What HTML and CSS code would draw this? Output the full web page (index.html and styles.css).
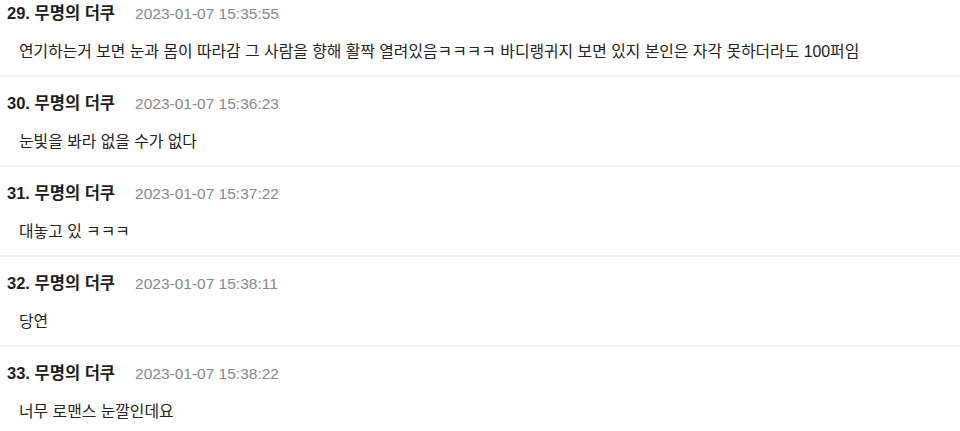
FILE: index.html
```html
<!DOCTYPE html>
<html lang="ko">
<head>
<meta charset="utf-8">
<link rel="stylesheet" href="styles.css">
</head>
<body>
<ul class="comments">
  <li class="comment">
    <div class="meta"><span class="name">29. 무명의 더쿠</span><span class="date">2023-01-07 15:35:55</span></div>
    <p class="text">연기하는거 보면 눈과 몸이 따라감 그 사람을 향해 활짝 열려있음ㅋㅋㅋㅋ 바디랭귀지 보면 있지 본인은 자각 못하더라도 100퍼임</p>
  </li>
  <li class="comment">
    <div class="meta"><span class="name">30. 무명의 더쿠</span><span class="date">2023-01-07 15:36:23</span></div>
    <p class="text">눈빛을 봐라 없을 수가 없다</p>
  </li>
  <li class="comment">
    <div class="meta"><span class="name">31. 무명의 더쿠</span><span class="date">2023-01-07 15:37:22</span></div>
    <p class="text">대놓고 있 ㅋㅋㅋ</p>
  </li>
  <li class="comment">
    <div class="meta"><span class="name">32. 무명의 더쿠</span><span class="date">2023-01-07 15:38:11</span></div>
    <p class="text">당연</p>
  </li>
  <li class="comment">
    <div class="meta"><span class="name">33. 무명의 더쿠</span><span class="date">2023-01-07 15:38:22</span></div>
    <p class="text">너무 로맨스 눈깔인데요</p>
  </li>
</ul>
</body>
</html>
```
FILE: styles.css
```css
html, body {
  margin: 0;
  padding: 0;
  background: #fff;
}
body {
  font-family: "Liberation Sans", "Noto Sans CJK KR", sans-serif;
  color: #222;
}
.comments {
  list-style: none;
  margin: -13px 0 0 0;
  padding: 0;
}
.comment {
  height: 90px;
  box-sizing: border-box;
  padding: 16px 0 0 7px;
  border-bottom: 2px solid #efefef;
}
.meta {
  display: flex;
  align-items: baseline;
  height: 20px;
  line-height: 20px;
}
.name {
  font-size: 16.5px;
  font-weight: bold;
  color: #1e1e1e;
}
.date {
  margin-left: 20px;
  font-size: 15.5px;
  color: #888;
}
.text {
  margin: 19px 0 0 12px;
  font-size: 15.85px;
  line-height: 20px;
  color: #222;
}
```
